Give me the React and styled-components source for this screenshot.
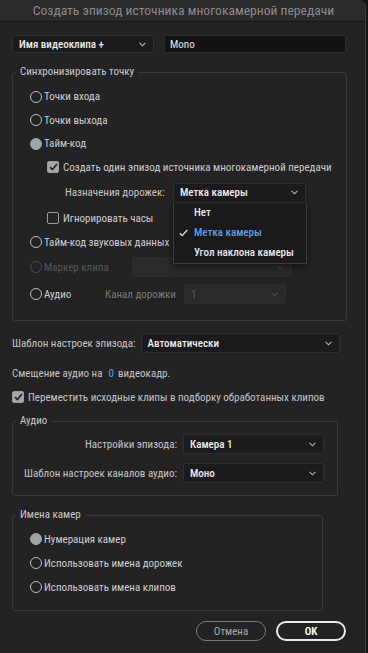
import React from 'react'
import styled, { createGlobalStyle } from 'styled-components'

const GlobalStyle = createGlobalStyle`
  html, body {
    margin: 0;
    padding: 0;
    background: #161616;
  }
  * {
    box-sizing: border-box;
  }
`

const Window = styled.div`
  width: 366px;
  height: 653px;
  background: #232323;
  border-right: 1px solid #3a3a3a;
  border-top-right-radius: 7px;
  overflow: hidden;
  font-family: "Roboto Condensed", Roboto, "Noto Sans", sans-serif;
  font-size: 11px;
  color: #cdcdcd;
  white-space: nowrap;
  display: flex;
  flex-direction: column;
`

const TitleBar = styled.div`
  height: 22px;
  flex: none;
  background: #2b2b2b;
  border-bottom: 1px solid #141414;
  color: #8a8a8a;
  font-size: 13.6px;
  line-height: 21px;
  text-align: center;
  padding-left: 2px;
`

const Content = styled.div`
  padding: 13px 0 0 12px;
  display: flex;
  flex-direction: column;
`

const TopRow = styled.div`
  display: flex;
  gap: 10px;
  height: 18px;
`

const SelectBox = styled.div`
  position: relative;
  width: ${p => p.$w}px;
  height: ${p => p.$h || 20}px;
  flex: none;
  background: ${p => (p.$disabled ? '#2a2a2a' : '#1b1b1b')};
  border: 1px solid ${p => (p.$disabled ? '#2c2c2c' : '#2f2f2f')};
  border-radius: 2px;
  display: flex;
  align-items: center;
  justify-content: space-between;
  padding: 0 7px 0 6px;
  color: ${p => (p.$disabled ? '#555' : '#ececec')};
  font-weight: 500;
`

const TextField = styled.div`
  width: 182px;
  height: 18px;
  background: #131313;
  border: 1px solid #2c2c2c;
  border-radius: 1px;
  padding-left: 5px;
  display: flex;
  align-items: center;
  color: #e6e6e6;
`

const Chevron = ({ dim }) => (
  <svg width="7" height="5" viewBox="0 0 7 5">
    <polyline points="0.6,0.8 3.5,3.8 6.4,0.8" fill="none" stroke={dim ? '#4c4c4c' : '#b4b4b4'} strokeWidth="1.1" />
  </svg>
)

const Select = ({ w, h, disabled, children }) => (
  <SelectBox $w={w} $h={h} $disabled={disabled}>
    <span>{children}</span>
    <Chevron dim={disabled} />
  </SelectBox>
)

const Group = styled.fieldset`
  margin: ${p => p.$mt || 0}px 0 0 0;
  padding: 0;
  width: ${p => p.$w}px;
  border: 1px solid #393939;
  border-radius: 3px;
  min-width: 0;
`

const Legend = styled.legend`
  margin-left: 3px;
  padding: 0 4px;
  line-height: 14px;
  color: #c9c9c9;
`

const GroupBody = styled.div`
  padding: ${p => p.$pt}px 0 ${p => p.$pb}px 17px;
  display: flex;
  flex-direction: column;
`

const Row = styled.div`
  height: ${p => p.$h || 24}px;
  display: flex;
  align-items: center;
  padding-left: ${p => p.$indent || 0}px;
  color: ${p => (p.$disabled ? '#565656' : '#cdcdcd')};
`

const RadioCircle = styled.span`
  width: 12px;
  height: 12px;
  flex: none;
  border-radius: 50%;
  border: 1.6px solid;
  background: ${p => (p.$on ? '#a3a3a3' : 'transparent')};
  border-color: ${p => (p.$on ? '#a3a3a3' : p.$disabled ? '#4a4a4a' : '#bdbdbd')};
  margin-right: 2px;
`

const RadioLabel = styled.span`
  display: flex;
  align-items: center;
  min-width: ${p => p.$w || 0}px;
`

const Radio = ({ on, disabled, w, children }) => (
  <RadioLabel $w={w}>
    <RadioCircle $on={on} $disabled={disabled} />
    {children}
  </RadioLabel>
)

const CheckSquare = styled.span`
  width: 12px;
  height: 12px;
  flex: none;
  border-radius: 2px;
  border: 1.5px solid #9c9c9c;
  background: ${p => (p.$on ? '#a6a6a6' : 'transparent')};
  margin-right: 4px;
  display: flex;
  align-items: center;
  justify-content: center;
`

const Check = ({ on, children }) => (
  <>
    <CheckSquare $on={on}>
      {on && (
        <svg width="9" height="8" viewBox="0 0 9 8">
          <polyline points="1,4.2 3.4,6.6 8,1" fill="none" stroke="#262626" strokeWidth="1.7" />
        </svg>
      )}
    </CheckSquare>
    {children}
  </>
)

const FieldLabel = styled.span`
  color: ${p => (p.$dim ? '#7a7a7a' : '#c4c4c4')};
  min-width: ${p => p.$w || 0}px;
`

const Menu = styled.div`
  position: absolute;
  top: 19px;
  left: -1px;
  width: 134px;
  background: #1a1a1a;
  border: 1px solid #3b3b3b;
  border-top: none;
  box-shadow: 0 3px 8px rgba(0, 0, 0, 0.5);
  z-index: 5;
  font-weight: 500;
`

const MenuItem = styled.div`
  height: 20px;
  display: flex;
  align-items: center;
  padding-left: 20px;
  position: relative;
  color: ${p => (p.$active ? '#5a9ee6' : '#e8e8e8')};
`

const MenuCheck = styled.svg`
  position: absolute;
  left: 5px;
  top: 6px;
`

const PlainRow = styled.div`
  height: 20px;
  margin-top: ${p => p.$mt || 0}px;
  display: flex;
  align-items: center;
  gap: ${p => p.$gap || 0}px;
  color: #c4c4c4;
`

const Blue = styled.span`
  color: #5a9ee6;
  margin: 0 4px 0 6px;
`

const FormGrid = styled.div`
  display: grid;
  grid-template-columns: 1fr 141px;
  column-gap: 6px;
  row-gap: 5px;
  align-items: center;
  padding: 4px 13px 10px 0;
`

const GridLabel = styled.div`
  height: 24px;
  display: flex;
  align-items: center;
  justify-content: flex-end;
  color: #c4c4c4;
`

const Buttons = styled.div`
  display: flex;
  gap: 10px;
  margin: 10px 0 0 184px;
`

const Button = styled.div`
  width: 70px;
  height: 20px;
  border-radius: 10px;
  border: ${p => (p.$primary ? '2px solid #e9e9e9' : '1.5px solid #7a7a7a')};
  color: ${p => (p.$primary ? '#ffffff' : '#a9a9a9')};
  font-weight: ${p => (p.$primary ? 600 : 400)};
  display: flex;
  align-items: center;
  justify-content: center;
`

export default function App() {
  return (
    <>
      <GlobalStyle />
      <Window>
        <TitleBar>Создать эпизод источника многокамерной передачи</TitleBar>
        <Content>
          <TopRow>
            <Select w={142} h={18}>Имя видеоклипа +</Select>
            <TextField>Mono</TextField>
          </TopRow>

          <Group $w={335} $mt={12}>
            <Legend>Синхронизировать точку</Legend>
            <GroupBody $pt={6} $pb={12}>
              <Row $h={23}><Radio>Точки входа</Radio></Row>
              <Row $h={24}><Radio>Точки выхода</Radio></Row>
              <Row $h={23}><Radio on>Тайм-код</Radio></Row>
              <Row $h={24} $indent={17}><Check on>Создать один эпизод источника многокамерной передачи</Check></Row>
              <Row $h={27} $indent={35}>
                <FieldLabel $w={108}>Назначения дорожек:</FieldLabel>
                <SelectBox $w={133}>
                  <span>Метка камеры</span>
                  <Chevron />
                  <Menu>
                    <MenuItem>Нет</MenuItem>
                    <MenuItem $active>
                      <MenuCheck width="9" height="8" viewBox="0 0 9 8">
                        <polyline points="0.8,4.2 3.2,6.6 8.2,1" fill="none" stroke="#e0e0e0" strokeWidth="1.3" />
                      </MenuCheck>
                      Метка камеры
                    </MenuItem>
                    <MenuItem>Угол наклона камеры</MenuItem>
                  </Menu>
                </SelectBox>
              </Row>
              <Row $h={24} $indent={17}><Check>Игнорировать часы</Check></Row>
              <Row $h={24}><Radio>Тайм-код звуковых данных</Radio></Row>
              <Row $h={26} $disabled>
                <Radio disabled w={102}>Маркер клипа</Radio>
                <Select w={160} disabled />
              </Row>
              <Row $h={28}>
                <Radio w={75}>Аудио</Radio>
                <FieldLabel $dim $w={79}>Канал дорожки</FieldLabel>
                <Select w={102} disabled>1</Select>
              </Row>
            </GroupBody>
          </Group>

          <PlainRow $mt={12} $gap={5}>
            Шаблон настроек эпизода:
            <Select w={199}>Автоматически</Select>
          </PlainRow>
          <PlainRow $mt={10}>
            Смещение аудио на<Blue>0</Blue>видеокадр.
          </PlainRow>
          <PlainRow $mt={4}>
            <Check on>Переместить исходные клипы в подборку обработанных клипов</Check>
          </PlainRow>

          <Group $w={326} $mt={7}>
            <Legend>Аудио</Legend>
            <FormGrid>
              <GridLabel>Настройки эпизода:</GridLabel>
              <Select w={141}>Камера 1</Select>
              <GridLabel>Шаблон настроек каналов аудио:</GridLabel>
              <Select w={141}>Моно</Select>
            </FormGrid>
          </Group>

          <Group $w={311} $mt={12}>
            <Legend>Имена камер</Legend>
            <GroupBody $pt={5} $pb={11}>
              <Row><Radio on>Нумерация камер</Radio></Row>
              <Row><Radio>Использовать имена дорожек</Radio></Row>
              <Row><Radio>Использовать имена клипов</Radio></Row>
            </GroupBody>
          </Group>

          <Buttons>
            <Button>Отмена</Button>
            <Button $primary>OK</Button>
          </Buttons>
        </Content>
      </Window>
    </>
  )
}
